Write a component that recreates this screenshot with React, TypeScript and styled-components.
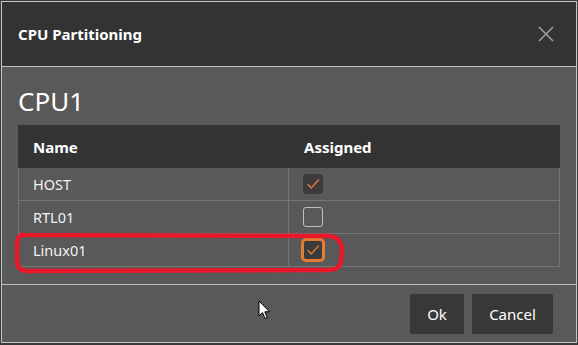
import React from "react";
import styled, { createGlobalStyle, css } from "styled-components";

const GlobalStyle = createGlobalStyle`
  html, body {
    margin: 0;
    padding: 0;
    background: #3a3a3a;
  }
  body {
    font-family: "Noto Sans", "Open Sans", sans-serif;
    color: #ffffff;
  }
`;

const Screen = styled.div`
  position: relative;
  width: 578px;
  height: 345px;
  overflow: hidden;
`;

const Dialog = styled.div`
  margin: 1px 0 0 1px;
  width: 574px;
  border: 1px solid #c4c4c4;
  display: flex;
  flex-direction: column;
  background: #595959;
`;

const Header = styled.div`
  height: 64px;
  display: flex;
  align-items: center;
  justify-content: space-between;
  padding: 0 22px 0 16px;
  background: #333333;
  border-bottom: 1px solid #bdbdbd;
`;

const Title = styled.h1`
  margin: 0;
  font-size: 15px;
  font-weight: 700;
  color: #ffffff;
`;

const CloseButton = styled.button`
  border: 0;
  padding: 0;
  background: transparent;
  width: 16px;
  height: 16px;
  display: flex;
  cursor: pointer;

  svg {
    stroke: #a0a0a0;
    stroke-width: 1.5;
  }
`;

const Body = styled.div`
  height: 217px;
  padding: 0 16px;
  border-bottom: 1px solid #bdbdbd;
`;

const SectionTitle = styled.h2`
  margin: 18px 0 8px;
  font-size: 26px;
  line-height: 32px;
  font-weight: 400;
  color: #ffffff;
`;

const Table = styled.div`
  display: grid;
  grid-template-columns: 1fr 1fr;
`;

const HeaderCell = styled.div`
  height: 43px;
  display: flex;
  align-items: center;
  padding-left: 15px;
  background: #333333;
  font-size: 15px;
  font-weight: 700;
`;

const Cell = styled.div<{ first?: boolean }>`
  height: 32px;
  display: flex;
  align-items: center;
  padding-left: 14px;
  border-bottom: 1px solid #767676;
  border-right: 1px solid #767676;
  font-size: 14.5px;
  color: #f2f2f2;

  ${({ first }) =>
    first &&
    css`
      border-left: 1px solid #767676;
      padding-left: 14px;
    `}
`;

const CheckBox = styled.span<{ checked?: boolean; focused?: boolean }>`
  box-sizing: border-box;
  width: 20px;
  height: 20px;
  border-radius: 3px;
  display: flex;
  align-items: center;
  justify-content: center;
  border: 1px solid #bdbdbd;

  svg {
    stroke: #e07a3a;
    stroke-width: 1.5;
    fill: none;
  }

  ${({ checked }) =>
    checked &&
    css`
      background: #3b3b3b;
      border-color: #3b3b3b;
    `}

  ${({ focused }) =>
    focused &&
    css`
      border-color: #e47c34;
      box-shadow: 0 0 0 2px #e47c34;
    `}
`;

const Footer = styled.div`
  height: 57px;
  display: flex;
  align-items: center;
  justify-content: flex-end;
  gap: 8px;
  padding-right: 23px;
`;

const Button = styled.button<{ width: number }>`
  width: ${({ width }) => width}px;
  height: 40px;
  border: 0;
  border-radius: 2px;
  background: #383838;
  color: #ffffff;
  font-family: inherit;
  font-size: 15px;
`;

const Annotation = styled.svg`
  position: absolute;
  left: 0;
  top: 0;
  pointer-events: none;
`;

const Cursor = styled.svg`
  position: absolute;
  left: 258px;
  top: 300px;
`;

type Partition = { name: string; assigned: boolean; focused?: boolean };

const partitions: Partition[] = [
  { name: "HOST", assigned: true },
  { name: "RTL01", assigned: false },
  { name: "Linux01", assigned: true, focused: true },
];

const Check = () => (
  <svg width="20" height="20" viewBox="0 0 20 20">
    <path d="M4 10 L8 14.5 L16.5 5" />
  </svg>
);

export default function App() {
  return (
    <Screen>
      <GlobalStyle />
      <Dialog>
        <Header>
          <Title>CPU Partitioning</Title>
          <CloseButton aria-label="Close">
            <svg width="16" height="16" viewBox="0 0 16 16">
              <path d="M1 1 L15 15 M15 1 L1 15" />
            </svg>
          </CloseButton>
        </Header>
        <Body>
          <SectionTitle>CPU1</SectionTitle>
          <Table>
            <HeaderCell>Name</HeaderCell>
            <HeaderCell>Assigned</HeaderCell>
            {partitions.map((p) => (
              <React.Fragment key={p.name}>
                <Cell first>{p.name}</Cell>
                <Cell>
                  <CheckBox checked={p.assigned} focused={p.focused}>
                    {p.assigned && <Check />}
                  </CheckBox>
                </Cell>
              </React.Fragment>
            ))}
          </Table>
        </Body>
        <Footer>
          <Button width={54}>Ok</Button>
          <Button width={81}>Cancel</Button>
        </Footer>
      </Dialog>

      <Annotation width="578" height="345">
        <path
          d="M24 235 L330 236 Q342 238 342 250 L341 262 Q339 270 328 270 L26 271 Q17 270 17 260 L17 243 Q18 234 24 235 Z"
          fill="none"
          stroke="#e8182a"
          strokeWidth="4.5"
          strokeLinejoin="round"
        />
      </Annotation>

      <Cursor width="14" height="21" viewBox="0 0 14 21">
        <path
          d="M1 1 L1 16 L4.5 12.5 L7 18.5 L9.2 17.6 L6.8 11.8 L11.5 11.8 Z"
          fill="#ffffff"
          stroke="#000000"
          strokeWidth="1"
          strokeLinejoin="round"
        />
      </Cursor>
    </Screen>
  );
}
